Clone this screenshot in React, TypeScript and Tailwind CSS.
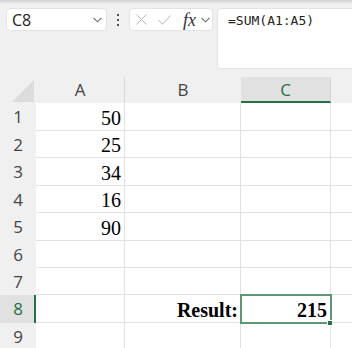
import React from "react";

const GREEN = "#1e7145";
const rows = [
  { n: 1, h: 28, a: "50" },
  { n: 2, h: 27, a: "25" },
  { n: 3, h: 28, a: "34" },
  { n: 4, h: 27, a: "16" },
  { n: 5, h: 28, a: "90" },
  { n: 6, h: 27 },
  { n: 7, h: 27 },
  { n: 8, h: 28, b: "Result:", c: "215", sel: true },
  { n: 9, h: 27 },
];

const Chevron = ({ className = "" }: { className?: string }) => (
  <svg width="9" height="6" viewBox="0 0 9 6" className={className}>
    <path d="M0.5 0.8 L4.5 4.8 L8.5 0.8" fill="none" stroke="#6b6b6b" strokeWidth="1.1" />
  </svg>
);

export default function App() {
  return (
    <div className="w-[352px] h-[348px] overflow-hidden bg-[#f0f0f0] relative" style={{ fontFamily: "'Open Sans', 'Noto Sans', sans-serif" }}>
      <div className="absolute top-0 left-0 right-0 h-[4px] bg-gradient-to-b from-[#cfcfcf] to-[#f0f0f0]" />
      {/* toolbar */}
      <div className="h-[77px] flex items-start pt-[8px] pl-[6px]">
        <div className="shrink-0 w-[101px] h-[23px] bg-white rounded-[4px] border border-[#e3e3e3] flex items-center pl-[5px] pr-[4px] justify-between">
          <span className="text-[16px] text-[#222] leading-none">C8</span>
          <Chevron className="mt-[1px]" />
        </div>
        <div className="shrink-0 w-[22px] h-[23px] flex flex-col items-center justify-center gap-[3px]">
          <span className="w-[2px] h-[2px] bg-[#555]" />
          <span className="w-[2px] h-[2px] bg-[#555]" />
          <span className="w-[2px] h-[2px] bg-[#555]" />
        </div>
        <div className="shrink-0 w-[84px] h-[23px] bg-white rounded-[4px] border border-[#e3e3e3] flex items-center pl-[6px]">
          <svg width="11" height="11" viewBox="0 0 11 11">
            <path d="M0.5 0.5 L10.5 10.5 M10.5 0.5 L0.5 10.5" stroke="#b5b5b5" strokeWidth="1" />
          </svg>
          <svg width="13" height="10" viewBox="0 0 13 10" className="ml-[11px]">
            <path d="M0.5 5 L4.5 9.3 L12.5 0.5" fill="none" stroke="#b5b5b5" strokeWidth="1" />
          </svg>
          <span className="ml-[12px] italic text-[18px] leading-none text-[#333]" style={{ fontFamily: "'Liberation Serif', serif" }}>fx</span>
          <Chevron className="ml-[5px] mt-[1px]" />
        </div>
        <div className="shrink-0 ml-[4px] w-[160px] h-[61px] bg-white rounded-tl-[4px] rounded-bl-[4px] border border-[#e3e3e3] pl-[10px] pt-[3px]">
          <div className="text-[13px] leading-[18px] text-[#222]" style={{ fontFamily: "'DejaVu Sans Mono', monospace" }}>=SUM(A1:A5)</div>
        </div>
      </div>
      {/* header row */}
      <div className="flex h-[26px]">
        <div className="shrink-0 w-[36px] relative">
          <svg width="23" height="23" viewBox="0 0 23 23" className="absolute left-[12px] top-[3px]">
            <path d="M22 0 L22 22 L0 22 Z" fill="#dcdcdc" />
          </svg>
        </div>
        <div className="shrink-0 w-[89px] border-r border-[#dadada] flex items-center justify-center text-[17px] text-[#444]">A</div>
        <div className="shrink-0 w-[116px] flex items-center justify-center text-[17px] text-[#444]">B</div>
        <div className="shrink-0 w-[90px] bg-[#e1e1e1] border-b-2 border-[#217346] border-r border-r-[#d4d4d4] flex items-center justify-center text-[17px] pt-[2px]" style={{ color: GREEN }}>C</div>
        <div className="flex-1" />
      </div>
      {/* body */}
      <div className="relative">
        {rows.map((r) => (
          <div key={r.n} className="flex" style={{ height: r.h }}>
            <div
              className={`shrink-0 w-[36px] flex items-center justify-center text-[17px] ${r.sel ? "bg-[#e1e1e1] border-r-2 border-[#217346]" : "text-[#444]"}`}
              style={r.sel ? { color: GREEN } : undefined}
            >
              <span className={r.sel ? "ml-[2px]" : ""}>{r.n}</span>
            </div>
            <div className="shrink-0 w-[89px] bg-white border-r border-b border-[#e1e1e1] flex items-center justify-end pr-[3px] pt-[2px] text-[20px] text-black" style={{ fontFamily: "'Liberation Serif', serif" }}>{r.a ?? ""}</div>
            <div className="shrink-0 w-[116px] bg-white border-r border-b border-[#e1e1e1] flex items-center justify-end pr-[2px] pt-[2px] text-[20px] font-bold text-black" style={{ fontFamily: "'Liberation Serif', serif" }}>{r.b ?? ""}</div>
            <div className="shrink-0 w-[90px] bg-white border-r border-b border-[#e1e1e1] flex items-center justify-end pr-[3px] pt-[2px] text-[20px] font-bold text-black" style={{ fontFamily: "'Liberation Serif', serif" }}>{r.c ?? ""}</div>
            <div className="flex-1 bg-white border-b border-[#e1e1e1]" />
          </div>
        ))}
        {/* selection */}
        <div className="absolute left-[240px] top-[191px] w-[92px] h-[30px] border-2 border-[#5f9675] pointer-events-none" />
        <div className="absolute left-[327px] top-[217px] w-[6px] h-[6px] bg-[#217346] border border-white" />
      </div>
    </div>
  );
}
